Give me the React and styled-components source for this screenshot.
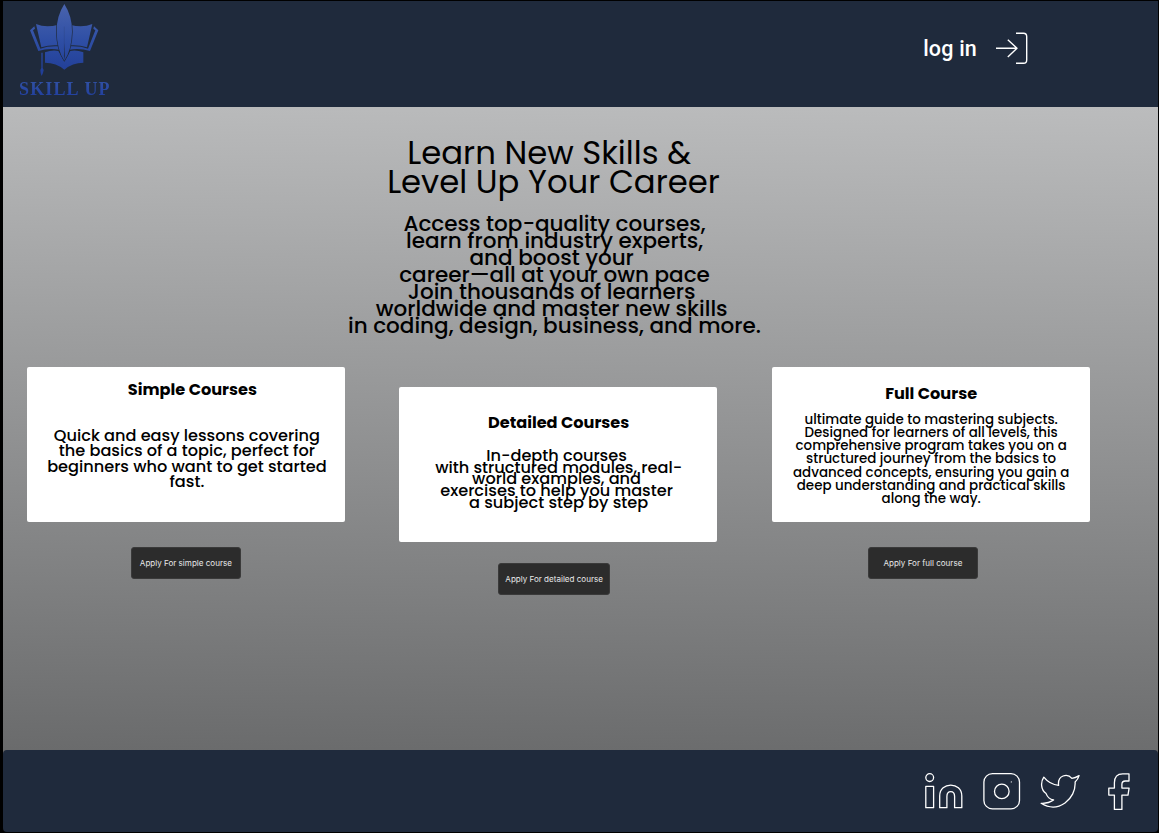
import React from 'react';
import styled, { createGlobalStyle } from 'styled-components';

const GlobalStyle = createGlobalStyle`
  *, *::before, *::after { box-sizing: border-box; }
  body { margin: 0; background: #000; }
`;

const Page = styled.div`
  display: flex;
  flex-direction: column;
  width: 1159px;
  height: 833px;
  padding: 1px 1px 1px 3px;
  background: #000;
  overflow: hidden;
  font-family: Poppins, Inter, sans-serif;
  color: #000;
`;

const Header = styled.header`
  display: flex;
  justify-content: space-between;
  height: 106px;
  padding-right: 129px;
  background: #1f2a3c;
`;

const Brand = styled.div`
  display: flex;
  flex-direction: column;
  width: 122px;
  padding-left: 12px;
`;

const BrandMark = styled.svg`
  display: block;
  width: 100px;
  height: 78px;
`;

const BrandName = styled.span`
  padding-left: 4px;
  font: 700 18px/20px 'Liberation Serif', serif;
  letter-spacing: 1.15px;
  white-space: nowrap;
  background: linear-gradient(#2f4fa3 20%, #2240a0 85%);
  background-clip: text;
  color: transparent;
`;

const Login = styled.a`
  display: flex;
  align-items: center;
  align-self: flex-start;
  gap: 18px;
  margin-top: 30px;
  height: 34px;
  color: #fff;
  font: 500 21.5px/34px Roboto, sans-serif;
  letter-spacing: 0.2px;
`;

const LoginLabel = styled.span`
  padding-top: 2px;
`;

const Main = styled.main`
  display: flex;
  flex-direction: column;
  height: 643px;
  padding-top: 30.6px;
  background: linear-gradient(181deg, #bbbcbd, #6a6b6c);
`;

const Hero = styled.section`
  display: flex;
  flex-direction: column;
  align-items: center;
  align-self: flex-start;
  width: 460px;
  margin-left: 320.5px;
  text-align: center;
`;

const Heading = styled.h1`
  margin: 0;
  font-size: 32.3px;
  font-weight: 400;
  line-height: 29.5px;
`;

const Lead = styled.p`
  margin: 18.4px 0 0;
  padding-left: 2px;
  font-size: 21.53px;
  font-weight: 500;
  line-height: 17px;
`;

const Line = styled.span`
  display: block;
  white-space: pre;
`;

const Courses = styled.section`
  display: flex;
  align-items: flex-start;
  gap: 54.5px;
  margin: 33px 0 0 23.9px;
`;

const Course = styled.div`
  display: flex;
  flex-direction: column;
  align-items: center;
  gap: ${p => p.$gap}px;
  width: 318px;
  margin-top: ${p => p.$drop}px;
`;

const Card = styled.article`
  width: 318px;
  height: 155px;
  padding-top: ${p => p.$top}px;
  border-radius: 2px;
  background: #fff;
  text-align: center;
`;

const CardTitle = styled.h2`
  margin: 0 0 ${p => p.$gap}px;
  padding-left: ${p => p.$indent}px;
  font-size: 16.15px;
  font-weight: 700;
  line-height: 24px;
`;

const CardText = styled.p`
  margin: 0;
  padding-left: ${p => p.$indent}px;
  font-size: ${p => p.$size}px;
  font-weight: 500;
  line-height: ${p => p.$leading}px;
`;

const Apply = styled.button`
  width: ${p => p.$width}px;
  height: 32px;
  margin: 0 ${p => p.$shift}px 0 0;
  padding: 0;
  border: 1px solid #3a3a3a;
  border-radius: 3px;
  background: #2c2c2c;
  color: #e8e8e8;
  font: 400 8.07px/12px Inter, sans-serif;
  white-space: nowrap;
`;

const FooterWrap = styled.div`
  background: linear-gradient(#69696a 50%, #000 50%);
`;

const Footer = styled.footer`
  display: flex;
  justify-content: flex-end;
  align-items: flex-start;
  height: 82px;
  padding: 21px 20px 0 0;
  border-radius: 4px;
  background: #1f2a3c;
`;

const Icon = styled.svg`
  display: block;
  flex: none;
  fill: none;
  stroke: #fff;
  stroke-width: ${p => p.$stroke || 1.3};
  stroke-linejoin: round;
`;

const Social = styled.nav`
  display: flex;
  gap: 18px;
`;

const courses = [
  {
    title: 'Simple Courses', indent: 13, textIndent: 2, top: 11.3, titleGap: 25.6,
    size: 16.15, leading: 15.5, drop: 0, gap: 25,
    button: 'Apply For simple course', width: 110, shift: 0,
    lines: [
      'Quick and easy lessons covering',
      'the basics of a topic, perfect for',
      'beginners who want to get started',
      'fast.',
    ],
  },
  {
    title: 'Detailed Courses', indent: 0.5, textIndent: 0.5, top: 24.2, titleGap: 15.1,
    size: 16.15, leading: 11.6, drop: 20, gap: 21,
    button: 'Apply For detailed course', width: 112, shift: 8.5,
    lines: [
      'In-depth courses ',
      'with structured modules, real-',
      'world examples, and ',
      'exercises to help you master ',
      'a subject step by step',
    ],
  },
  {
    title: 'Full Course', indent: 0.5, textIndent: 0.5, top: 15.3, titleGap: 6.6,
    size: 13.42, leading: 13.2, drop: 0, gap: 25,
    button: 'Apply For full course', width: 110, shift: 16,
    lines: [
      'ultimate guide to mastering subjects.',
      'Designed for learners of all levels, this',
      'comprehensive program takes you on a',
      'structured journey from the basics to',
      'advanced concepts, ensuring you gain a',
      'deep understanding and practical skills',
      'along the way.',
    ],
  },
];

const Lines = ({ items }) => items.map(text => <Line key={text}>{text}</Line>);

export default function App() {
  return (
    <>
      <GlobalStyle />
      <Page>
        <Header>
          <Brand>
            <BrandMark viewBox="0 3 300 234">
              <defs>
                <linearGradient id="ink" gradientUnits="userSpaceOnUse" x1="0" y1="10" x2="0" y2="230">
                  <stop offset="0" stopColor="#4a64ae" />
                  <stop offset="0.5" stopColor="#2f4fa5" />
                  <stop offset="1" stopColor="#1f3c96" />
                </linearGradient>
              </defs>
              <g fill="url(#ink)">
                <path d="M90 157Q112 149 130 153L148 184L166 153Q184 149 205 157V188Q172 188 148 209Q124 188 90 188Z" />
                <path d="M63 72Q93 85 130 74V136Q103 134 79 142Z" />
                <path d="M232 72Q202 85 165 74V136Q192 134 216 142Z" />
                <path d="M58 79L45 91L70 153Q101 143 132 149V139Q100 137 76 146L54 91L60 86Z" />
                <path d="M237 79L250 91L225 153Q194 143 163 149V139Q195 137 219 146L241 91L235 86Z" />
                <path d="M79 158h4v46l3 6-2 9-4 9-3-8-1-10 3-6Z" />
                <path stroke="#1f2a3c" strokeWidth="4" paintOrder="stroke" d="M148 12Q172 49 171 95Q170 149 148 182Q126 149 125 95Q124 49 148 12Z" />
              </g>
              <path d="M148 80V150" fill="none" stroke="#1f2a3c" strokeWidth="1" opacity="0.4" />
              <path d="M148 130L146.8 168L148 180L149.2 168Z" fill="#1f2a3c" />
            </BrandMark>
            <BrandName>SKILL UP</BrandName>
          </Brand>
          <Login>
            <LoginLabel>log in</LoginLabel>
            <Icon width="34" height="34" viewBox="0 0 34 34" $stroke={1.4}>
              <path d="M1 17.3H22M12.8 8.8L22 17.3L12.8 26M21 2.3H28.5Q31.7 2.3 31.7 5.5V29Q31.7 32.3 28.5 32.3H21" />
            </Icon>
          </Login>
        </Header>
        <Main>
          <Hero>
            <Heading>
              <Lines items={['Learn New Skills & ', 'Level Up Your Career']} />
            </Heading>
            <Lead>
              <Lines
                items={[
                  'Access top-quality courses,',
                  'learn from industry experts,',
                  'and boost your ',
                  'career—all at your own pace',
                  'Join thousands of learners ',
                  'worldwide and master new skills ',
                  'in coding, design, business, and more.',
                ]}
              />
            </Lead>
          </Hero>
          <Courses>
            {courses.map(c => (
              <Course key={c.title} $drop={c.drop} $gap={c.gap}>
                <Card $top={c.top}>
                  <CardTitle $gap={c.titleGap} $indent={c.indent}>
                    <Line>{c.title}</Line>
                  </CardTitle>
                  <CardText $size={c.size} $leading={c.leading} $indent={c.textIndent}>
                    <Lines items={c.lines} />
                  </CardText>
                </Card>
                <Apply $width={c.width} $shift={c.shift}>{c.button}</Apply>
              </Course>
            ))}
          </Courses>
        </Main>
        <FooterWrap>
          <Footer>
            <Social>
              <Icon width="40" height="40" viewBox="0 -0.4 40 40">
                <circle cx="5.7" cy="6.2" r="3.9" />
                <path d="M1.8 15H9.6V36.3H1.8ZM15.7 36.3V24.5C15.7 10 37.8 10 37.8 24.5V36.3H30.6V25C30.6 18.5 22.9 18.5 22.9 25V36.3Z" />
              </Icon>
              <Icon width="40" height="40" viewBox="0 -0.4 40 40">
                <rect x="1.9" y="2.2" width="35.6" height="35.3" rx="8.5" />
                <circle cx="19.8" cy="20" r="7.3" />
                <circle cx="29.3" cy="10.5" r="0.6" fill="#fff" stroke="none" />
              </Icon>
              <Icon width="40" height="40" viewBox="-0.3 -0.4 40 40">
                <path d="M3.5 5.8C7.5 10.8 12.5 13.5 18.3 14C17 3.8 27 1.5 31.6 7C34 6.7 36.5 5.6 38.8 4.2C38 7 36.5 9 34.8 10.5C36 27.5 18 42.5 .8 31.9C5.5 32.2 9.5 31.2 13.3 28.5C9.5 27.8 7 25.5 5.8 22.2C.2 18 .3 10.5 3.5 5.8Z" />
              </Icon>
              <Icon width="40" height="40" viewBox="-1.2 -0.4 40 40">
                <path d="M29.8 2.4V9.6H26.1C23.6 9.6 22.7 10.8 22.7 13V16.7H29.9L28.8 23.7H22.7V38H15.2V23.7H9.6V16.7H15.2V11.4C15.2 5.5 18.5 2.4 23.5 2.4Z" />
              </Icon>
            </Social>
          </Footer>
        </FooterWrap>
      </Page>
    </>
  );
}
